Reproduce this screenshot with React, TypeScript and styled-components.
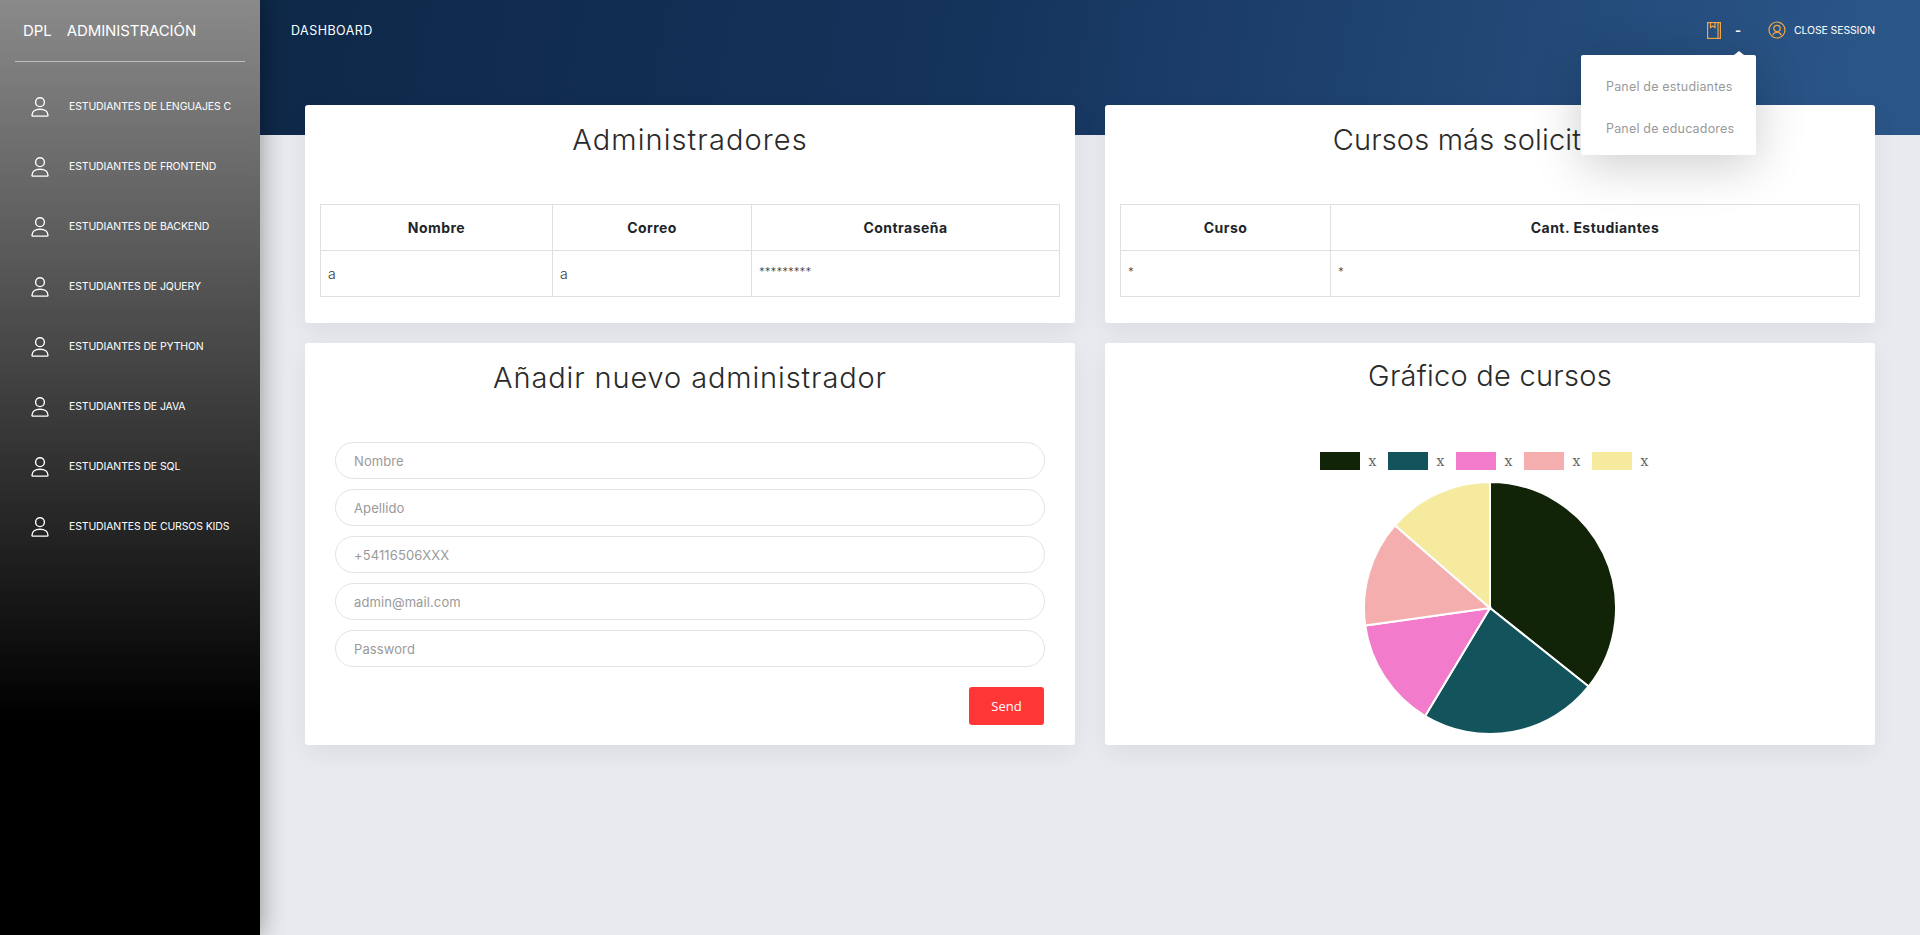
import React from "react";
import styled, { createGlobalStyle } from "styled-components";

const Global = createGlobalStyle`
  html, body { margin: 0; padding: 0; height: 100%; }
  body { background: #e9eaef; font-family: Inter, "Open Sans", sans-serif; color: #222; overflow: hidden; }
  * { box-sizing: border-box; }
`;

const Shell = styled.div`
  display: flex;
  height: 935px;
  width: 1920px;
  position: relative;
`;

const Sidebar = styled.aside`
  width: 260px;
  flex: none;
  height: 100%;
  background: linear-gradient(180deg, #8a8a8a 0%, #000 77%);
  box-shadow: 0 0 24px rgba(0, 0, 0, 0.4);
  position: relative;
  z-index: 3;
  color: #fff;
`;

const Brand = styled.div`
  margin: 0 15px;
  height: 62px;
  padding: 0 8px 1px;
  display: flex;
  align-items: center;
  gap: 15px;
  border-bottom: 1px solid rgba(255, 255, 255, 0.5);
  font-size: 15px;
  letter-spacing: -0.08px;
  white-space: nowrap;
`;

const Menu = styled.nav`
  display: flex;
  flex-direction: column;
  padding-top: 15px;
`;

const MenuItem = styled.a`
  height: 60px;
  padding-left: 31px;
  display: flex;
  align-items: center;
  gap: 20px;
  font-size: 10.5px;
  letter-spacing: -0.13px;
  white-space: nowrap;
`;

const MenuLabel = styled.span`
  margin-bottom: 2px;
`;

const Main = styled.main`
  flex: 1;
  min-width: 0;
  display: flex;
  flex-direction: column;
  position: relative;
`;

const TopBar = styled.header`
  height: 135px;
  flex: none;
  background: linear-gradient(100deg, #0e2848 0%, #14325a 40%, #2a5587 95%);
  padding: 0 45px 0 31px;
  color: #fff;
  display: flex;
  align-items: flex-start;
  justify-content: space-between;
`;

const BarTitle = styled.div`
  height: 60px;
  padding-top: 1px;
  display: flex;
  align-items: center;
  font-size: 12.5px;
  letter-spacing: 0.47px;
`;

const BarActions = styled.div`
  height: 60px;
  display: flex;
  align-items: center;
  font-size: 10.5px;
  position: relative;
`;

const Dash = styled.span`
  margin: 0 27px 0 14px;
  font-size: 13px;
  font-weight: 700;
`;

const SessionLabel = styled.span`
  margin-left: 8px;
  letter-spacing: -0.13px;
`;

const Dropdown = styled.div`
  position: absolute;
  top: 55px;
  right: 164px;
  width: 175px;
  height: 100px;
  background: #fff;
  border-radius: 2px;
  box-shadow: 0 10px 50px rgba(0, 0, 0, 0.2);
  z-index: 5;
  padding-top: 10px;
  &::before {
    content: "";
    position: absolute;
    top: -4px;
    right: 12px;
    border-left: 5px solid transparent;
    border-right: 5px solid transparent;
    border-bottom: 4px solid #fff;
  }
`;

const DropItem = styled.a`
  display: flex;
  align-items: center;
  height: 42px;
  padding-left: 25px;
  font-size: 12.5px;
  letter-spacing: 0.18px;
  color: #999;
  white-space: nowrap;
`;

const Content = styled.div`
  margin-top: -30px;
  padding: 0 45px;
  display: grid;
  grid-template-columns: 770px 770px;
  grid-template-rows: 218px 402px;
  gap: 20px 30px;
  position: relative;
  z-index: 1;
`;

const Card = styled.section`
  background: #fff;
  border-radius: 3px;
  box-shadow: 0 8px 24px rgba(0, 0, 0, 0.06);
  padding: 15px;
  display: flex;
  flex-direction: column;
`;

const CardTitle = styled.h2<{ $track: number }>`
  margin: 0;
  height: 48px;
  padding-bottom: 10px;
  display: flex;
  align-items: center;
  justify-content: center;
  font-size: 29px;
  font-weight: 300;
  letter-spacing: ${(p) => p.$track}px;
  color: #2a2a2a;
  white-space: nowrap;
`;

const Table = styled.table`
  margin-top: 36px;
  width: 739px;
  border-collapse: collapse;
  table-layout: fixed;
  font-size: 14px;
`;

const Th = styled.th<{ $w: number }>`
  width: ${(p) => p.$w}px;
  height: 46px;
  border: 1px solid #dfe0e4;
  font-weight: 700;
  font-size: 14px;
  letter-spacing: 0.45px;
  color: #212529;
`;

const Td = styled.td<{ $mask?: boolean }>`
  height: 46px;
  border: 1px solid #dfe0e4;
  padding: ${(p) => (p.$mask ? "0 7px 4px" : "0 7px")};
  font-size: ${(p) => (p.$mask ? "11.6px" : "14px")};
  color: #333;
  font-weight: 300;
`;

const Form = styled.form`
  margin-top: 36px;
  padding: 0 15px;
  display: flex;
  flex-direction: column;
  gap: 10px;
`;

const Field = styled.input`
  display: block;
  width: 100%;
  height: 37px;
  border: 1px solid #e3e3e3;
  border-radius: 19px;
  padding: 0 18px;
  font: 400 13px Inter, sans-serif;
  letter-spacing: 0.1px;
  outline: none;
  background: #fff;
  &::placeholder { color: #9a9a9a; opacity: 1; }
`;

const FormFoot = styled.div`
  display: flex;
  justify-content: flex-end;
  padding: 10px 1px 0 0;
`;

const Send = styled.button`
  width: 75px;
  height: 38px;
  border: 0;
  border-radius: 3px;
  background: #ff3636;
  color: #fff;
  font: 400 13px "Open Sans", sans-serif;
`;

const ChartWrap = styled.div`
  flex: 1;
  display: flex;
  flex-direction: column;
  align-items: center;
  padding-top: 46px;
  gap: 8px;
`;

const Legend = styled.div`
  display: flex;
  align-items: center;
  gap: 9px;
  height: 24px;
  margin-right: 10px;
`;

const LegendItem = styled.div`
  display: flex;
  align-items: center;
  width: 59px;
  gap: 9px;
  font: 14px "DejaVu Serif", serif;
  color: #666;
`;

const Swatch = styled.span<{ $c: string }>`
  width: 40px;
  height: 18px;
  background: ${(p) => p.$c};
  flex: none;
`;

const PieSvg = styled.svg`
  display: block;
`;

const UserIcon = () => (
  <svg width="18" height="20" viewBox="0 0 18 20" fill="none" stroke="#fff" strokeWidth="1.4" style={{ flex: "none" }}>
    <circle cx="9" cy="5.2" r="4.4" />
    <path d="M1 18.2c0-3.6 3.2-6 8-6s8 2.4 8 6c0 .6-.3.9-1 .9H2c-.7 0-1-.3-1-.9z" />
  </svg>
);

const BookIcon = () => (
  <svg width="14" height="17" viewBox="0 0 14 17" fill="none" stroke="#f5a742" strokeWidth="1.2" style={{ flex: "none" }}>
    <rect x="0.6" y="0.6" width="12.8" height="15.8" />
    <path d="M11 .6v15.8M3.5.6v5l2.2-1.6L8 5.6v-5" />
  </svg>
);

const SessionIcon = () => (
  <svg width="18" height="18" viewBox="0 0 18 18" fill="none" stroke="#f5a742" strokeWidth="1.2" style={{ flex: "none" }}>
    <circle cx="9" cy="9" r="8" />
    <circle cx="9" cy="7.5" r="3.2" />
    <path d="M5 14.2c0-1.7 1.6-2.7 4-2.7s4 1 4 2.7" />
  </svg>
);

const courses = ["LENGUAJES C", "FRONTEND", "BACKEND", "JQUERY", "PYTHON", "JAVA", "SQL", "CURSOS KIDS"];
const fields = ["Nombre", "Apellido", "+54116506XXX", "admin@mail.com", "Password"];
const slices = [
  { from: 0, to: 128.5, c: "#112407" },
  { from: 128.5, to: 211, c: "#13545c" },
  { from: 211, to: 262, c: "#f27bcb" },
  { from: 262, to: 311, c: "#f5aeae" },
  { from: 311, to: 360, c: "#f5ea9e" },
];

const point = (deg: number, r: number) => {
  const a = ((deg - 90) * Math.PI) / 180;
  return `${127 + r * Math.cos(a)} ${127 + r * Math.sin(a)}`;
};

export default function App() {
  return (
    <>
      <Global />
      <Shell>
        <Sidebar>
          <Brand>
            <span>DPL</span>
            <span>ADMINISTRACIÓN</span>
          </Brand>
          <Menu>
            {courses.map((c) => (
              <MenuItem key={c}>
                <UserIcon />
                <MenuLabel>ESTUDIANTES DE {c}</MenuLabel>
              </MenuItem>
            ))}
          </Menu>
        </Sidebar>
        <Main>
          <TopBar>
            <BarTitle>DASHBOARD</BarTitle>
            <BarActions>
              <BookIcon />
              <Dash>-</Dash>
              <SessionIcon />
              <SessionLabel>CLOSE SESSION</SessionLabel>
            </BarActions>
            <Dropdown>
              <DropItem>Panel de estudiantes</DropItem>
              <DropItem>Panel de educadores</DropItem>
            </Dropdown>
          </TopBar>
          <Content>
            <Card>
              <CardTitle $track={1.1}>Administradores</CardTitle>
              <Table>
                <thead>
                  <tr>
                    <Th $w={232}>Nombre</Th>
                    <Th $w={199}>Correo</Th>
                    <Th $w={308}>Contraseña</Th>
                  </tr>
                </thead>
                <tbody>
                  <tr>
                    <Td>a</Td>
                    <Td>a</Td>
                    <Td $mask>*********</Td>
                  </tr>
                </tbody>
              </Table>
            </Card>
            <Card>
              <CardTitle $track={0.15}>Cursos más solicitados</CardTitle>
              <Table>
                <thead>
                  <tr>
                    <Th $w={210}>Curso</Th>
                    <Th $w={529}>Cant. Estudiantes</Th>
                  </tr>
                </thead>
                <tbody>
                  <tr>
                    <Td $mask>*</Td>
                    <Td $mask>*</Td>
                  </tr>
                </tbody>
              </Table>
            </Card>
            <Card>
              <CardTitle $track={0.88}>Añadir nuevo administrador</CardTitle>
              <Form>
                {fields.map((f) => (
                  <Field key={f} placeholder={f} />
                ))}
                <FormFoot>
                  <Send type="button">Send</Send>
                </FormFoot>
              </Form>
            </Card>
            <Card>
              <CardTitle $track={0.25}>Gráfico de cursos</CardTitle>
              <ChartWrap>
                <Legend>
                  {slices.map((s) => (
                    <LegendItem key={s.c}>
                      <Swatch $c={s.c} />x
                    </LegendItem>
                  ))}
                </Legend>
                <PieSvg width="254" height="254" viewBox="0 0 254 254">
                  {slices.map((s) => (
                    <path
                      key={s.c}
                      fill={s.c}
                      stroke="#fff"
                      strokeWidth="2"
                      d={`M127 127L${point(s.from, 126)}A126 126 0 ${s.to - s.from > 180 ? 1 : 0} 1 ${point(s.to, 126)}Z`}
                    />
                  ))}
                </PieSvg>
              </ChartWrap>
            </Card>
          </Content>
        </Main>
      </Shell>
    </>
  );
}
